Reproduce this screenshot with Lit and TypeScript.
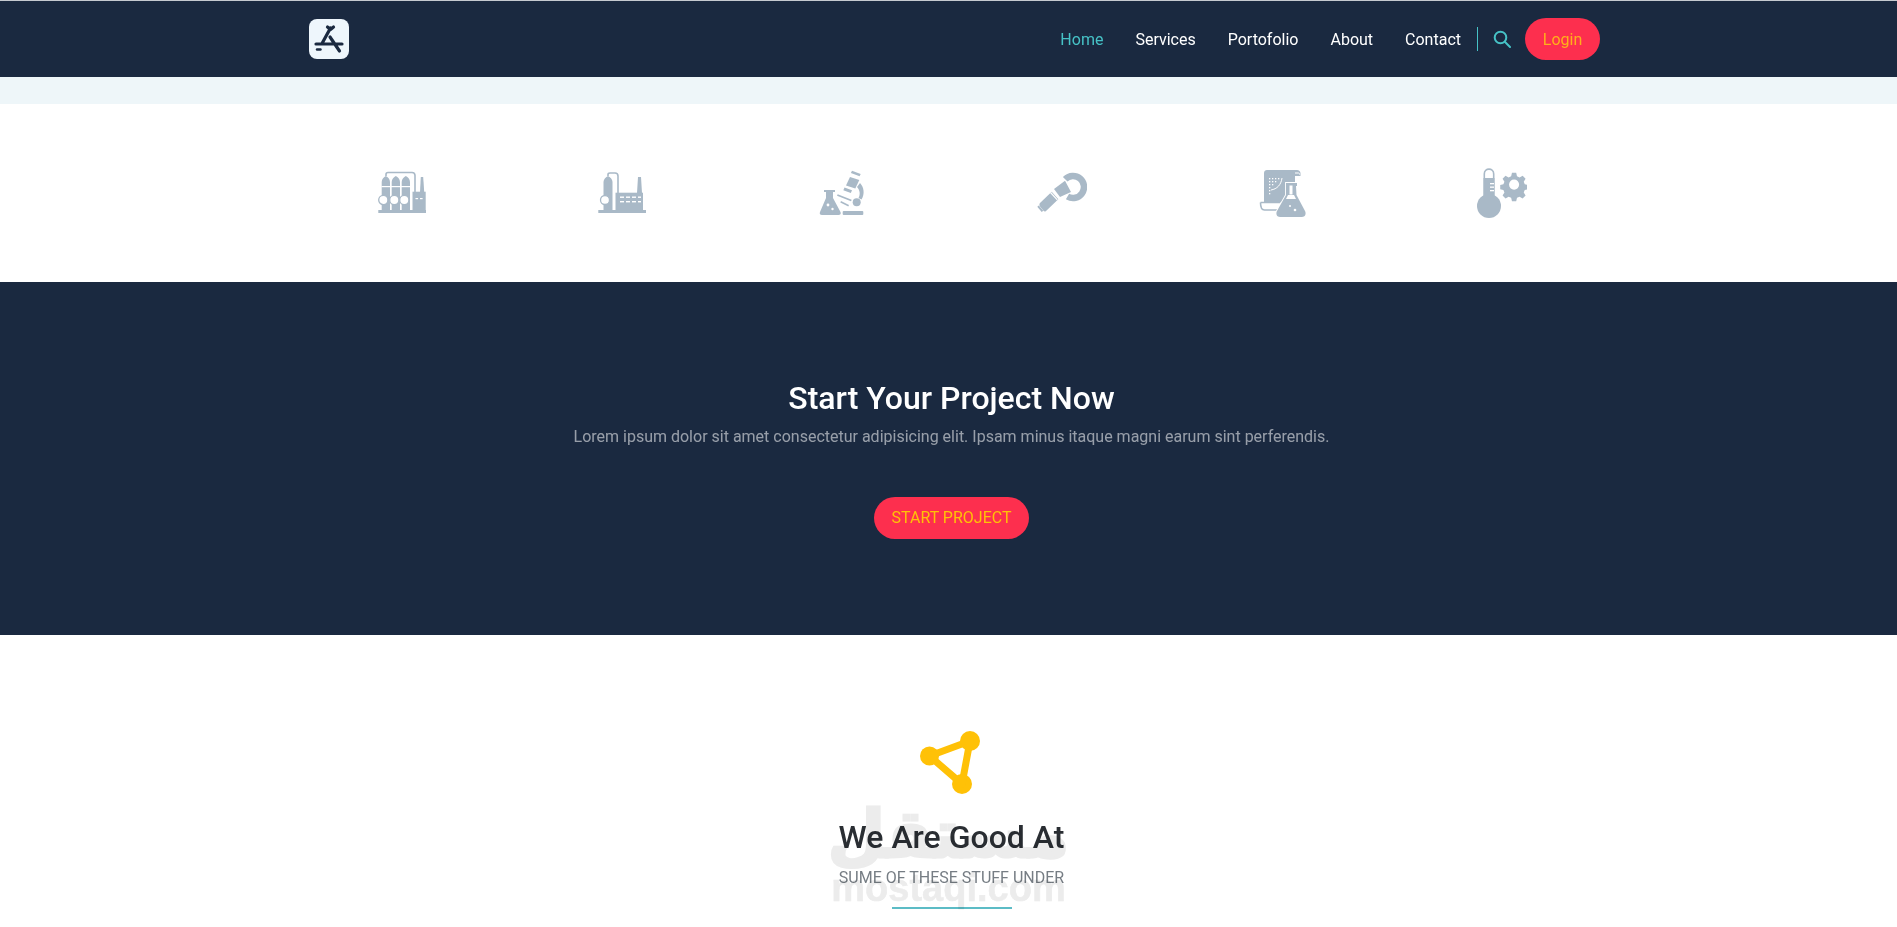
import { LitElement, html, css, svg } from "lit";
import { customElement } from "lit/decorators.js";

const W = "#ffffff";
const G = "#a9b9c7";
const icons = [
  svg`<g fill="${G}">
    <rect x="1.300" y="42" width="47.700" height="3"/>
    <path d="M4.700 42V14c0-3 2.200-5 4.150-6 1.950 1 4.150 3 4.150 6v28zM14.700 42V14c0-3 2.200-5 4.150-6 1.950 1 4.150 3 4.150 6v28zM24.700 42V14c0-3 2.200-5 4.150-6 1.950 1 4.150 3 4.150 6v28z"/>
    <rect x="35.500" y="23.700" width="13.200" height="19"/><path d="M43 24l.8-15h2.400l1 15z"/>
    <path d="M9 8V6.500C9 5 10 4.500 11 4.500h24C37 4.500 38 6 38 7.500V42" fill="none" stroke="${G}" stroke-width="1.600"/>
  </g>
  <g fill="${W}" stroke="${G}" stroke-width="1.300">
    <circle cx="6.300" cy="32" r="4.600"/><circle cx="17.300" cy="32" r="4.600"/><circle cx="27.300" cy="32" r="4.600"/>
  </g>
  <g fill="${W}"><rect x="4.500" y="18" width="29" height="1.200"/><rect x="38.500" y="30" width="2.600" height="1.200"/><rect x="43" y="30" width="2.600" height="1.200"/></g>`,
  svg`<g fill="${G}">
    <rect x="1.300" y="42" width="47.700" height="3"/>
    <path d="M6.500 42V14c0-3 2.500-5 4.500-6 2 1 4.500 3 4.500 6v28z"/>
    <rect x="18.500" y="24.700" width="27.500" height="18"/><path d="M40 25l1-16h3l1 16z"/>
    <path d="M11 8V6.500C11 5.500 12 5 13 5h5c2 0 3 1 3 3v34" fill="none" stroke="${G}" stroke-width="1.600"/>
  </g>
  <circle cx="8" cy="32" r="4.500" fill="${W}" stroke="${G}" stroke-width="1.300"/>
  <g fill="${W}">
    <rect x="23" y="28.500" width="4" height="1.400"/><rect x="29" y="28.500" width="4" height="1.400"/><rect x="35" y="28.500" width="4" height="1.400"/><rect x="41" y="28.500" width="3" height="1.400"/>
    <rect x="23" y="33" width="4" height="1.400"/><rect x="29" y="33" width="4" height="1.400"/><rect x="35" y="33" width="4" height="1.400"/><rect x="41" y="33" width="3" height="1.400"/>
  </g>`,
  svg`<g fill="${G}">
    <rect x="7" y="22" width="11" height="2"/>
    <path d="M9 24h7v6l7.500 14c.8 1.700-.2 3-2 3H5c-1.800 0-2.800-1.300-2-3l6-14z"/>
    <rect x="25.700" y="43" width="20.600" height="4" rx="1"/>
    <path d="M35 2.700l8.700 3.300-1.100 2.300-8.700-3.300z"/>
    <path d="M33 9l9.300 3.100-4 8.500-9.300-3.100z"/>
    <path d="M27.500 19.500l7.500 2.700-1.200 2.800-7.500-2.700z"/>
    <path d="M43 15c4 4 5 11 1.500 16.500l-3-1.500c2-3.500 1.500-8-1.500-11z"/>
    <circle cx="39.700" cy="34.300" r="4"/>
    <path d="M20.700 26.200l14 5.500-.7 1.600-14-5.500zM24 33l8 4-.7 1.400-8-4z"/>
  </g>
  <g fill="${W}"><circle cx="11" cy="37" r="1.400"/><circle cx="15.500" cy="41" r="1.200"/></g>`,
  svg`<g fill="${G}">
    <path d="M28.200 11.200A11 11 0 1 1 30.500 28.500" fill="none" stroke="${G}" stroke-width="6.500"/>
    <path d="M17 21l11-8.300 6 11.300-11 5z"/>
    <path d="M3 35l11.700-11.300 6.600 7.600L9 43c-1 .8-1.800.6-2.500-.2L3 38.500c-.8-.9-.8-2.500 0-3.500z"/>
    <path d="M.3 38.700l1.500-1.300 4.500 5.300-1.600 1.300z"/>
  </g>
  <path d="M13.500 24.500l6.800 7.400" stroke="${W}" stroke-width="1.200"/>`,
  svg`<g fill="${G}">
    <path d="M10 2h30c2 0 3.500 1.500 3.500 3.500V8H38v26H7V5c0-1.700 1.300-3 3-3z"/>
    <path d="M3.500 34.500h20" stroke="${G}" stroke-width="1.500"/>
    <path d="M3.500 34.500c0 4 1 7.500 4 7.500h15" fill="none" stroke="${G}" stroke-width="1.600"/>
  </g>
  <path d="M38 5h3.500c.8 0 1 .5 1 1.500" fill="none" stroke="${W}" stroke-width="1"/>
  <path d="M29 15h11v3h-1l.5 9 8.500 16c1.500 3 0 6-3 6H23c-3 0-4.500-3-3-6l9-16v-9z" fill="${G}" stroke="${W}" stroke-width="1.800" paint-order="stroke"/>
  <path d="M32.500 17.500h3v9h-3z" fill="${W}"/><path d="M31 27h6l2 4H29z" fill="${W}"/>
  <g fill="${W}">
    <circle cx="33" cy="38" r="1"/><circle cx="38" cy="42" r="1.300"/>
    <rect x="12" y="10" width="1.300" height="1.300"/><rect x="15" y="10" width="1.300" height="1.300"/><rect x="18" y="10" width="1.300" height="1.300"/><rect x="21" y="10" width="1.300" height="1.300"/>
    <rect x="12" y="13" width="1.300" height="1.300"/><rect x="15" y="13" width="1.300" height="1.300"/><rect x="18" y="13" width="1.300" height="1.300"/><rect x="12" y="16" width="1.300" height="1.300"/><rect x="15" y="16" width="1.300" height="1.300"/><rect x="12" y="19" width="1.300" height="1.300"/><rect x="12" y="22" width="1.300" height="1.300"/><rect x="12" y="25" width="1.300" height="1.300"/>
  </g>
  <path d="M14 22c6-1 10-5 11-12" fill="none" stroke="${W}" stroke-width="1"/>`,
  svg`<g fill="${G}">
    <circle cx="12" cy="38" r="12"/><rect x="6.500" y="10" width="11" height="20"/>
    <path d="M7.300 28V6c0-6.500 9.400-6.500 9.400 0v22" fill="none" stroke="${G}" stroke-width="1.600"/>
    <path fill-rule="evenodd" d="M34.500 5h5l1 4 3 1.500 3.700-2 3.500 3.500-2.200 3.500 1.200 3 3.800 1v5l-3.800 1-1.200 3 2.200 3.500-3.500 3.500-3.700-2-3 1.200-1 4h-5l-1-4-3-1.200-3.700 2-3.500-3.500 2.200-3.500-1.200-3-3.800-1v-5l3.800-1 1.200-3-2.200-3.500 3.500-3.500 3.700 2 3-1.500zM37 13a6 6 0 100 12 6 6 0 000-12z" transform="translate(6 1.500) scale(.84) translate(0 -1)"/>
  </g>
  <g fill="${W}"><rect x="13" y="15" width="4" height="1.300"/><rect x="13" y="18.500" width="4" height="1.300"/><rect x="13" y="22" width="4" height="1.300"/></g>`,
];

@customElement("app-root")
export class AppRoot extends LitElement {
  static styles = css`
    :host { display: block; height: 927px; overflow: hidden; font-family: Roboto, "Liberation Sans", sans-serif; background: #fff; position: relative; }
    .page { width: 1903px; }
    .nav { background: #1a2940; border-top: 1px solid #c6cad0; height: 76px; display: flex; align-items: center; justify-content: space-between; padding: 0 303px 0 309px; }
    .logo { width: 40px; height: 40px; display: block; }
    .links { display: flex; align-items: center; }
    .links a { color: #fff; font-size: 16px; line-height: 24px; margin-left: 32px; padding-top: 1px; }
    .links a.active { color: #46c2c6; }
    .divider { width: 1px; height: 24px; background: #46c2c6; margin: 0 15px 0 16px; }
    .search { width: 18px; height: 18px; display: block; margin-right: 14px; }
    .btn { background: #fd2f4e; border-radius: 21px; height: 42px; display: flex; align-items: center; justify-content: center; font-size: 16px; box-sizing: border-box; }
    .login { width: 75px; color: #ffb01a; }
    .strip { height: 27px; background: #eef6f9; }
    .icons { height: 178px; display: grid; grid-template-columns: repeat(6, 220px); justify-content: center; align-items: center; justify-items: center; }
    .icons svg { width: 50px; height: 50px; display: block; }
    .hero { background: #1a2940; padding: 97px 0 96px; display: flex; flex-direction: column; align-items: center; }
    h2 { margin: 0; font-size: 32px; line-height: 38.4px; font-weight: 500; }
    .hero h2 { color: #fff; }
    .hero p { margin: 8px 0 48px; color: rgba(255,255,255,.55); font-size: 16px; line-height: 24px; }
    .start { width: 155px; color: #ffc107; padding-bottom: 1px; }
    .good { display: flex; flex-direction: column; align-items: center; padding-top: 94px; position: relative; }
    .mark { width: 80px; height: 65px; display: block; margin-left: 16px; }
    .good h2 { color: #2a2e33; margin-top: 24px; }
    .good .sub { color: #767d84; font-size: 16px; line-height: 24px; margin-top: 9px; }
    .rule { width: 120px; height: 2px; background: #5cbcc6; margin-top: 17px; }
    .wm { position: absolute; left: 827px; top: 796px; width: 243px; text-align: center; color: #ececec; mix-blend-mode: multiply; pointer-events: none; font-weight: 700; }
    .wm .ar { font-family: "DejaVu Sans", sans-serif; font-size: 66px; line-height: 78px; -webkit-text-stroke: 3px #ececec; }
    .wm .en { font-family: "Liberation Sans", sans-serif; font-size: 38px; line-height: 40px; margin-top: -6px; -webkit-text-stroke: 0.5px #ececec; }
  `;

  render() {
    return html`
      <div class="page">
        <header class="nav">
          <svg class="logo" viewBox="0 0 40 40">
            <rect width="40" height="40" rx="8" fill="#eef6fc"/>
            <g stroke="#1a2940" stroke-width="3.200" stroke-linecap="round" fill="none">
              <path d="M21.500 9L13 24.500M7 25h26M21 18l9.500 14M18.500 8l3 2.500M24.500 8l-3 2.500"/>
              <path d="M8 30.500h3.500" stroke-width="2.400"/>
            </g>
          </svg>
          <nav class="links">
            <a class="active">Home</a><a>Services</a><a>Portofolio</a><a>About</a><a>Contact</a>
            <span class="divider"></span>
            <svg class="search" viewBox="0 0 18 18" fill="none" stroke="#46c2c6" stroke-width="2">
              <circle cx="7.500" cy="7.500" r="5.800"/><path d="M11.800 11.800L17 17" stroke-linecap="round"/>
            </svg>
            <span class="btn login">Login</span>
          </nav>
        </header>
        <div class="strip"></div>
        <section class="icons">
          ${icons.map((i) => html`<svg viewBox="0 0 50 50">${i}</svg>`)}
        </section>
        <section class="hero">
          <h2>Start Your Project Now</h2>
          <p>Lorem ipsum dolor sit amet consectetur adipisicing elit. Ipsam minus itaque magni earum sint perferendis.</p>
          <span class="btn start">START PROJECT</span>
        </section>
        <section class="good">
          <svg class="mark" viewBox="0 0 80 65">
            <g fill="#ffc107"><circle cx="50" cy="12" r="10"/><circle cx="9.500" cy="27" r="9.500"/><circle cx="42" cy="55" r="10"/></g>
            <path d="M50 12L9.500 27L42 55Z" fill="none" stroke="#ffc107" stroke-width="7" stroke-linejoin="round"/>
          </svg>
          <h2>We Are Good At</h2>
          <div class="sub">SUME OF THESE STUFF UNDER</div>
          <div class="rule"></div>
        </section>
      </div>
      <div class="wm"><div class="ar">مستقل</div><div class="en">mostaqi.com</div></div>
    `;
  }
}
